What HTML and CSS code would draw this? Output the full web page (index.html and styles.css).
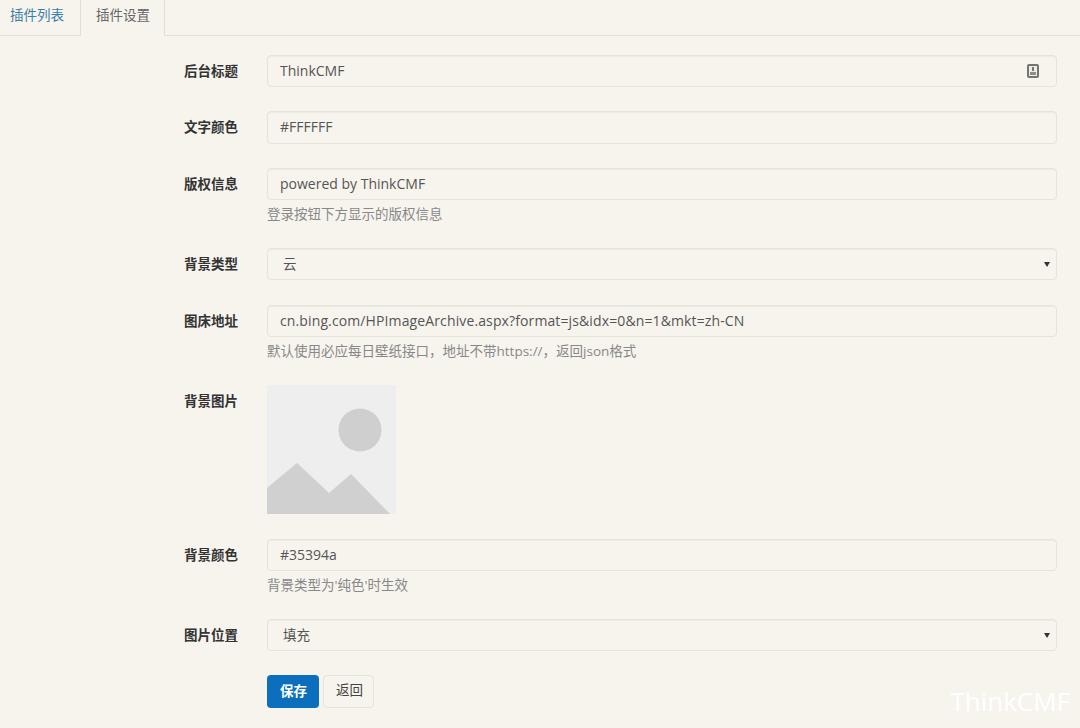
FILE: index.html
```html
<!DOCTYPE html>
<html lang="zh-CN">
  <head>
    <meta charset="UTF-8" />
    <meta name="viewport" content="width=device-width, initial-scale=1.0" />
    <title>插件设置</title>
    <link rel="stylesheet" href="styles.css">
  </head>
  <body>
    <ul class="nav-tabs">
      <li><a href="#">插件列表</a></li>
      <li class="active"><a href="#">插件设置</a></li>
    </ul>

    <form class="config-form">
      <label class="field-label">后台标题</label>
      <div class="field">
        <div class="input-wrap">
          <input type="text" class="form-control" value="ThinkCMF" />
          <svg class="input-icon" width="12" height="14" viewBox="0 0 12 14">
            <rect x="1" y="1" width="10" height="12" rx="1" fill="#efece6" stroke="#77756f" stroke-width="2" />
            <rect x="5" y="3" width="2" height="4" fill="#77756f" />
            <rect x="3" y="8" width="6" height="3" fill="#8f8d87" />
          </svg>
        </div>
      </div>

      <label class="field-label">文字颜色</label>
      <div class="field">
        <input type="text" class="form-control" value="#FFFFFF" />
      </div>

      <label class="field-label">版权信息</label>
      <div class="field">
        <input type="text" class="form-control" value="powered by ThinkCMF" />
        <p class="help-block">登录按钮下方显示的版权信息</p>
      </div>

      <label class="field-label">背景类型</label>
      <div class="field">
        <div class="select-wrap">
          <select class="form-control">
            <option>云</option>
          </select>
        </div>
      </div>

      <label class="field-label">图床地址</label>
      <div class="field">
        <input type="text" class="form-control url-input" value="cn.bing.com/HPImageArchive.aspx?format=js&amp;idx=0&amp;n=1&amp;mkt=zh-CN" />
        <p class="help-block">默认使用必应每日壁纸接口，地址不带https://，返回json格式</p>
      </div>

      <label class="field-label">背景图片</label>
      <div class="field thumb-field">
        <svg class="thumb" width="129" height="129" viewBox="0 0 129 129">
          <rect width="129" height="129" fill="#eeeeee" />
          <circle cx="93" cy="45" r="21.5" fill="#cfcfcf" />
          <polygon points="0,103 30,78 62,108 84,89 123,129 0,129" fill="#d0d0d0" />
        </svg>
      </div>

      <label class="field-label">背景颜色</label>
      <div class="field">
        <input type="text" class="form-control" value="#35394a" />
        <p class="help-block">背景类型为'纯色'时生效</p>
      </div>

      <label class="field-label">图片位置</label>
      <div class="field">
        <div class="select-wrap">
          <select class="form-control">
            <option>填充</option>
          </select>
        </div>
      </div>

      <div class="actions">
        <button type="submit" class="btn btn-primary">保存</button>
        <a href="#" class="btn btn-default">返回</a>
      </div>
    </form>

    <div class="watermark">ThinkCMF</div>
  </body>
</html>
```

FILE: styles.css
```css
body {
  font-family: "Open Sans", "Noto Sans CJK SC", sans-serif;
  font-size: 13.5px;
  margin: 0;
  padding: 0;
  background-color: #f7f4ee;
  color: #555;
  overflow: hidden;
  height: 728px;
  position: relative;
}

.nav-tabs {
  list-style: none;
  display: flex;
  height: 35px;
  margin: 0;
  padding: 0;
  border-bottom: 1px solid #e2dfd9;
}

.nav-tabs li {
  height: 36px;
  box-sizing: border-box;
}

.nav-tabs a {
  display: block;
  padding: 7px 16px 0 10px;
  line-height: 17px;
  color: #3b7ea8;
  text-decoration: none;
}

.nav-tabs .active {
  background-color: #f7f4ee;
  border-left: 1px solid #e2dfd9;
  border-right: 1px solid #e2dfd9;
}

.nav-tabs .active a {
  color: #666;
  padding: 7px 14px 0 15px;
}

.config-form {
  display: grid;
  grid-template-columns: 238px 790px;
  column-gap: 29px;
  padding-top: 19px;
}

.field-label {
  font-weight: 700;
  color: #333;
  text-align: right;
  line-height: 32.4px;
}

.field {
  margin-bottom: 24.2px;
}

.thumb-field {
  margin-bottom: 24.8px;
}

.form-control {
  display: block;
  width: 100%;
  height: 32.2px;
  box-sizing: border-box;
  padding: 0 12px 1px;
  font-family: inherit;
  font-size: 14px;
  color: #555;
  background-color: #f7f4ee;
  border: 1px solid #e6e3dc;
  border-radius: 4px;
  box-shadow: inset 0 1px 1px rgba(0, 0, 0, 0.04);
  outline: none;
}

.url-input {
  letter-spacing: 0.12px;
}

select.form-control {
  appearance: none;
  padding-left: 12px;
  font-size: 13.5px;
  text-indent: 3px;
}

.input-wrap,
.select-wrap {
  position: relative;
}

.input-icon {
  position: absolute;
  right: 18px;
  top: 9px;
}

.select-wrap::after {
  content: "";
  position: absolute;
  right: 7px;
  top: 14px;
  border-top: 5px solid #333;
  border-left: 3px solid transparent;
  border-right: 3px solid transparent;
}

.help-block {
  margin: 0;
  height: 24px;
  padding-top: 5px;
  line-height: 19px;
  box-sizing: border-box;
  color: #888;
  font-size: 13.5px;
}

.thumb {
  display: block;
}

.actions {
  grid-column: 2;
  display: flex;
  gap: 4px;
}

.btn {
  display: block;
  box-sizing: border-box;
  height: 32.4px;
  padding: 0 11px 0 12px;
  line-height: 29px;
  font-family: inherit;
  font-size: 13.5px;
  border-radius: 4px;
  border: 1px solid transparent;
  text-decoration: none;
}

.btn-primary {
  background-color: #0b6fbd;
  color: #fff;
  font-weight: 700;
}

.btn-default {
  padding-right: 10px;
  background-color: #f7f4ee;
  border-color: #e6e3dc;
  color: #444;
}

.watermark {
  position: absolute;
  right: 10px;
  bottom: 10px;
  font-size: 26px;
  line-height: 34px;
  color: #fff;
}
```
